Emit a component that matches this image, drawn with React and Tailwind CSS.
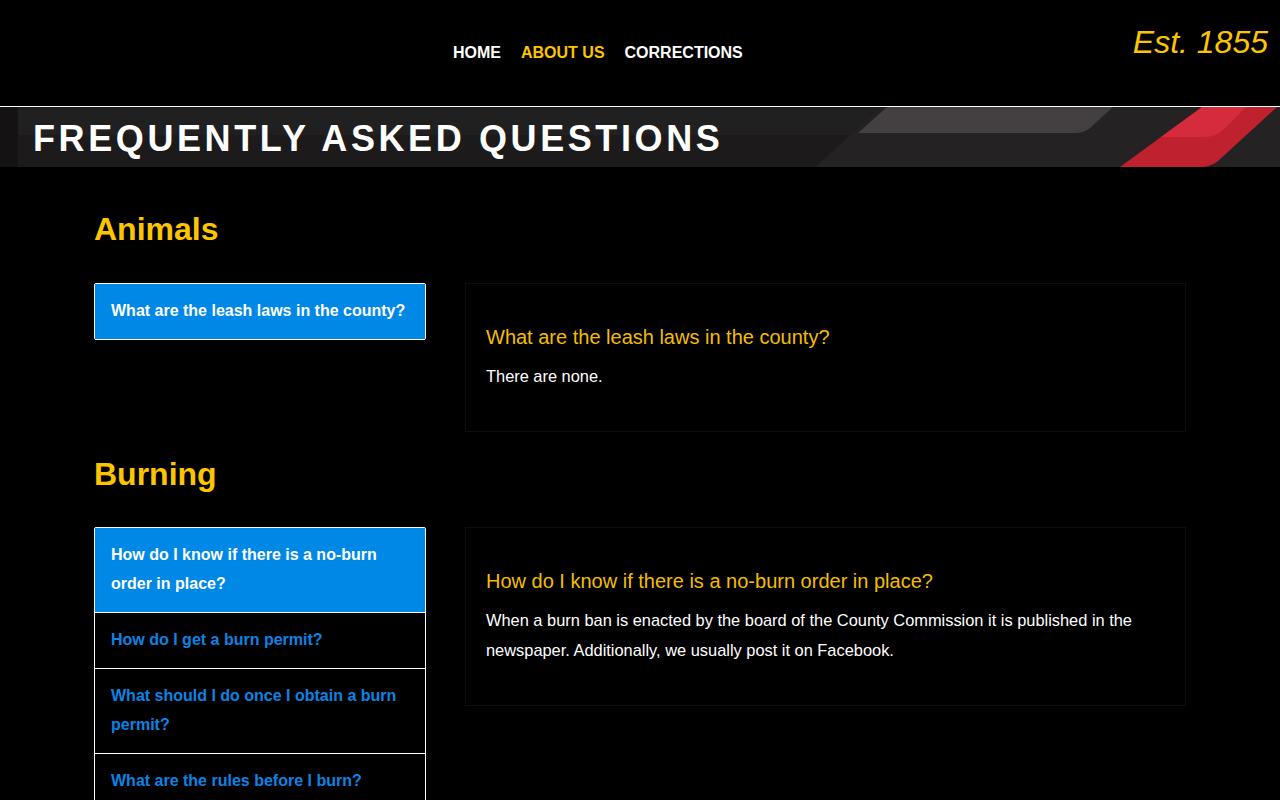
import React from "react";

const sections = [
  {
    title: "Animals",
    items: ["What are the leash laws in the county?"],
    answerTitle: "What are the leash laws in the county?",
    answer: "There are none.",
  },
  {
    title: "Burning",
    items: [
      "How do I know if there is a no-burn order in place?",
      "How do I get a burn permit?",
      "What should I do once I obtain a burn permit?",
      "What are the rules before I burn?",
    ],
    answerTitle: "How do I know if there is a no-burn order in place?",
    answer:
      "When a burn ban is enacted by the board of the County Commission it is published in the newspaper. Additionally, we usually post it on Facebook.",
  },
];

function BannerArt() {
  return (
    <svg
      className="absolute inset-0 h-full w-full"
      viewBox="0 0 1280 60"
      preserveAspectRatio="none"
    >
      <rect x="0" y="0" width="1280" height="60" fill="#1c1a1b" />
      <rect x="0" y="0" width="1280" height="28" fill="#212021" />
      <rect x="0" y="0" width="18" height="60" fill="#141213" />
      <polygon points="882,0 1280,0 1280,60 815,60" fill="#242223" />
      <path d="M887 0 L1113 0 L1090 21 Q1084 26 1075 26 L858 26 Z" fill="#444041" />
      <path d="M1202 0 L1277 0 L1218 54 Q1211 60 1200 60 L1120 60 Z" fill="#c0212f" />
      <path d="M1202 0 L1246 0 L1223 23 Q1216 30 1205 30 L1161 30 Z" fill="#d62b3c" />
    </svg>
  );
}

export default function App() {
  return (
    <div className="min-h-[800px] bg-black font-['Liberation_Sans',Arial,sans-serif] text-white">
      <header className="flex h-[106px] items-start justify-between">
        <nav className="ml-[453px] mt-[45px] flex gap-5 text-[16px] font-bold leading-none">
          <a className="text-white">HOME</a>
          <a className="text-[#fcc500]">ABOUT US</a>
          <a className="text-white">CORRECTIONS</a>
        </nav>
        <div className="mr-[12px] mt-[26px] text-[32px] italic leading-none text-[#fcc500]">
          Est. 1855
        </div>
      </header>

      <div className="relative h-[61px] border-t border-white">
        <BannerArt />
        <h1 className="relative pl-[33px] pt-[14px] text-[36px] font-bold leading-none tracking-[3.6px] text-white">
          FREQUENTLY ASKED QUESTIONS
        </h1>
      </div>

      <main className="ml-[94px] w-[1092px] pb-10">
        {sections.map((s, i) => (
          <section key={s.title} className={i === 0 ? "pt-[46px]" : "pt-[26px]"}>
            <h2 className="text-[32px] font-bold leading-none text-[#fcc500]">{s.title}</h2>
            <div
              className={
                i === 0
                  ? "mt-[38px] flex items-start gap-[39px]"
                  : "mt-[37px] flex items-start gap-[39px]"
              }
            >
              <ul className="w-[332px] shrink-0 divide-y divide-white rounded-[2px] border border-white">
                {s.items.map((q, j) => (
                  <li
                    key={q}
                    className={
                      j === 0
                        ? "bg-[#0088e6] px-4 pb-[14px] pt-[12px] text-[16px] font-bold leading-[29px] text-white"
                        : "bg-black px-4 pb-[14px] pt-[12px] text-[16px] font-bold leading-[29px] text-[#0d84e3]"
                    }
                  >
                    {q}
                  </li>
                ))}
              </ul>
              <div className="w-[721px] border border-[#0d0d0d] pb-[40px] pl-[20px] pr-[20px] pt-[43px]">
                <h3 className="text-[20px] leading-none text-[#f5bd00]">{s.answerTitle}</h3>
                <p className="mt-[14px] text-[16.4px] leading-[30px] text-white">{s.answer}</p>
              </div>
            </div>
          </section>
        ))}
      </main>
    </div>
  );
}
